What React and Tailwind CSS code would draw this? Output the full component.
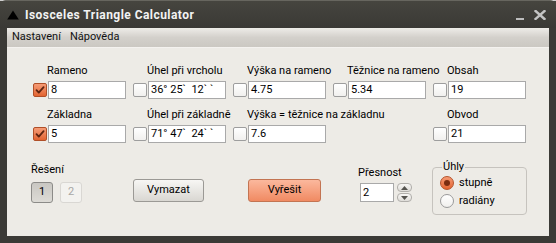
import React from "react";

function Checkbox({ checked }) {
  if (checked) {
    return (
      <div className="w-[14px] h-[14px] shrink-0 rounded-[2px] border border-[#b04f28] bg-gradient-to-b from-[#f59c76] to-[#e2632f] flex items-center justify-center">
        <svg width="10" height="10" viewBox="0 0 10 10">
          <path d="M1.5 5.2 L3.8 7.6 L8.6 2.2" fill="none" stroke="#5e2410" strokeWidth="1.8" strokeLinecap="round" strokeLinejoin="round" />
        </svg>
      </div>
    );
  }
  return (
    <div className="w-[14px] h-[14px] shrink-0 rounded-[2px] border border-[#9d9d9d] bg-gradient-to-b from-white to-[#f1f0ee]" />
  );
}

function Field({ label, value, checked }) {
  return (
    <div className="flex flex-col">
      <div className="h-[14px] leading-[14px] pl-[14px] whitespace-nowrap">{label}</div>
      <div className="mt-[3px] flex items-center gap-[1px]">
        <Checkbox checked={checked} />
        <div className="w-[78px] h-[18px] border border-[#a9a9a9] bg-white pl-[2px] leading-[16px] whitespace-pre">
          {value}
        </div>
      </div>
    </div>
  );
}

function Radio({ checked, label }) {
  return (
    <div className="h-[18px] flex items-center gap-[5px]">
      {checked ? (
        <div className="w-[14px] h-[14px] rounded-full border border-[#b5532b] bg-gradient-to-b from-[#f59a74] to-[#e2642f] flex items-center justify-center">
          <div className="w-[6px] h-[6px] rounded-full bg-[#7a2c10]" />
        </div>
      ) : (
        <div className="w-[14px] h-[14px] rounded-full border border-[#9a9a9a] bg-gradient-to-b from-white to-[#f0efed]" />
      )}
      <span className="leading-[14px]">{label}</span>
    </div>
  );
}

export default function App() {
  return (
    <div className="w-[556px] h-[243px] bg-[#cfcfcf] font-['Roboto',sans-serif] text-[11px] text-black">
      <div className="w-[556px] h-[243px] rounded-t-[6px] bg-[#3b3a36] border-t border-[#67665f] flex flex-col">
        {/* Title bar */}
        <div className="h-[27px] flex items-center pl-[7px] pr-[10px] bg-gradient-to-b from-[#46453f] to-[#3a3935]">
          <svg width="12" height="10" viewBox="0 0 12 10" className="mt-[1px]">
            <polygon points="6,0.5 11.8,9.5 0.2,9.5" fill="#000" />
          </svg>
          <span className="ml-[6px] text-[12px] font-bold text-[#f2f2f2] tracking-[0.45px]">Isosceles Triangle Calculator</span>
          <div className="ml-auto flex items-center gap-[10px]">
            <div className="w-[8px] h-[2px] bg-[#bdbdbd] mt-[8px]" />
            <svg width="12" height="10" viewBox="0 0 12 10">
              <path d="M1.5 1 L10.5 9 M10.5 1 L1.5 9" stroke="#c4c4c4" strokeWidth="2.4" strokeLinecap="square" />
            </svg>
          </div>
        </div>
        <div className="mx-[7px] flex flex-col">
          {/* Menu bar */}
          <div className="h-[20px] flex items-center gap-[9px] pl-[5px] bg-gradient-to-b from-[#eeece8] via-[#d3d0cb] to-[#cbc8c2] border-b border-[#f4f2ef] text-[#111]">
            <span>Nastavení</span>
            <span>Nápověda</span>
          </div>
          {/* Body */}
          <div className="h-[188px] bg-[#edebe6] pl-[24px] pt-[16px]">
            <div className="ml-[2px] grid grid-cols-[100px_100px_100px_100px_100px]">
              <Field label="Rameno" value="8" checked />
              <Field label="Úhel při vrcholu" value="36° 25`  12` `" />
              <Field label="Výška na rameno" value="4.75" />
              <Field label="Těžnice na rameno" value="5.34" />
              <Field label="Obsah" value="19" />
            </div>
            <div className="ml-[2px] mt-[9px] grid grid-cols-[100px_100px_100px_100px_100px]">
              <Field label="Základna" value="5" checked />
              <Field label="Úhel při základně" value="71° 47`  24` `" />
              <Field label="Výška = těžnice na základnu" value="7.6" />
              <div />
              <Field label="Obvod" value="21" />
            </div>
            <div className="flex">
              <div className="w-[102px] pt-[20px]">
                <div className="h-[14px] leading-[14px]">Řešení</div>
                <div className="mt-[5px] flex gap-[7px]">
                  <div className="w-[22px] h-[21px] rounded-[3px] border border-[#8c8b88] bg-gradient-to-b from-[#c9c7c2] to-[#dddbd6] flex items-center justify-center">1</div>
                  <div className="w-[22px] h-[21px] rounded-[3px] border border-[#d9d7d3] bg-[#f3f2ef] text-[#a8a7a4] flex items-center justify-center">2</div>
                </div>
              </div>
              <div className="pt-[36px]">
                <div className="w-[71px] h-[23px] rounded-[3px] border border-[#9b9995] bg-gradient-to-b from-[#f7f6f4] to-[#d9d7d2] flex items-center justify-center">Vymazat</div>
              </div>
              <div className="pt-[36px] ml-[44px]">
                <div className="w-[73px] h-[23px] rounded-[3px] border border-[#c37452] bg-gradient-to-b from-[#fbb89d] to-[#f08a62] flex items-center justify-center">Vyřešit</div>
              </div>
              <div className="w-[74px] ml-[37px] pt-[23px]">
                <div className="h-[14px] leading-[14px]">Přesnost</div>
                <div className="mt-[3px] ml-[2px] flex">
                  <div className="w-[34px] h-[19px] border border-[#a9a9a9] bg-white pl-[2px] leading-[17px]">2</div>
                  <div className="ml-[3px] flex flex-col gap-[1px]">
                    <div className="w-[15px] h-[9px] rounded-[4px] border border-[#b1afab] bg-gradient-to-b from-[#f8f7f5] to-[#dedcd8] flex items-center justify-center">
                      <svg width="7" height="4" viewBox="0 0 7 4"><polygon points="3.5,0 7,4 0,4" fill="#55544f" /></svg>
                    </div>
                    <div className="w-[15px] h-[9px] rounded-[4px] border border-[#b1afab] bg-gradient-to-b from-[#f8f7f5] to-[#dedcd8] flex items-center justify-center">
                      <svg width="7" height="4" viewBox="0 0 7 4"><polygon points="0,0 7,0 3.5,4" fill="#55544f" /></svg>
                    </div>
                  </div>
                </div>
              </div>
              <fieldset className="mt-[17px] w-[95px] h-[55px] rounded-[4px] border border-[#c6c3be] pl-[7px]">
                <legend className="ml-[2px] px-[1px] leading-[14px]">Úhly</legend>
                <Radio checked label="stupně" />
                <Radio label="radiány" />
              </fieldset>
            </div>
          </div>
        </div>
      </div>
    </div>
  );
}
